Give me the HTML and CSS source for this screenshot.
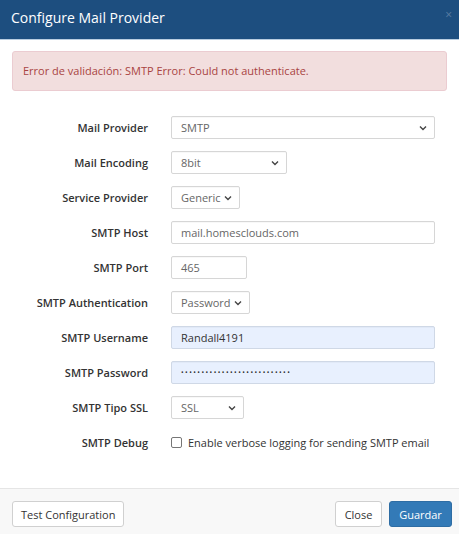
FILE: index.html
```html
<!DOCTYPE html>
<html>
<head>
<meta charset="utf-8">
<link rel="stylesheet" href="styles.css">
</head>
<body>
<div class="modal">
  <div class="modal-header">
    <h4 class="modal-title">Configure Mail Provider</h4>
    <span class="close-x">×</span>
  </div>
  <div class="modal-body">
    <div class="alert">Error de validación: SMTP Error: Could not authenticate.</div>
    <div class="form">
      <label class="lbl">Mail Provider</label>
      <div class="ctl"><div class="select w-full">SMTP</div></div>

      <label class="lbl">Mail Encoding</label>
      <div class="ctl"><div class="select w-enc">8bit</div></div>

      <label class="lbl">Service Provider</label>
      <div class="ctl"><div class="select w-sp">Generic</div></div>

      <label class="lbl">SMTP Host</label>
      <div class="ctl"><div class="input w-full">mail.homesclouds.com</div></div>

      <label class="lbl">SMTP Port</label>
      <div class="ctl"><div class="input w-port">465</div></div>

      <label class="lbl">SMTP Authentication</label>
      <div class="ctl"><div class="select w-auth">Password</div></div>

      <label class="lbl">SMTP Username</label>
      <div class="ctl"><div class="input autofill w-full dark">Randall4191</div></div>

      <label class="lbl">SMTP Password</label>
      <div class="ctl"><div class="input autofill w-full dark"><span class="dots">•••••••••••••••••••••••••••</span></div></div>

      <label class="lbl">SMTP Tipo SSL</label>
      <div class="ctl"><div class="select w-ssl">SSL</div></div>

      <label class="lbl">SMTP Debug</label>
      <div class="ctl"><span class="checkbox"></span><span class="cb-text">Enable verbose logging for sending SMTP email</span></div>
    </div>
  </div>
  <div class="modal-footer">
    <button class="btn">Test Configuration</button>
    <div class="right">
      <button class="btn close">Close</button>
      <button class="btn primary">Guardar</button>
    </div>
  </div>
</div>
</body>
</html>
```

FILE: styles.css
```css
html, body {
  margin: 0;
  padding: 0;
  background: #fff;
}
body {
  font-family: "Open Sans", "Liberation Sans", sans-serif;
  font-size: 11px;
  color: #333;
  width: 459px;
  height: 534px;
  overflow: hidden;
}
.modal {
  display: flex;
  flex-direction: column;
  height: 534px;
}
.modal-header {
  height: 39px;
  background: #1d4e7f;
  border-bottom: 1px solid #b9cde0;
  display: flex;
  align-items: center;
  justify-content: space-between;
  padding: 0 11px;
  box-sizing: content-box;
}
.modal-title {
  margin: 0;
  font-size: 14px;
  font-weight: 400;
  color: #fff;
  line-height: 20px;
  margin-top: -4px;
}
.close-x {
  color: #5a7ea3;
  font-size: 12px;
  line-height: 12px;
  margin-top: -10px;
  margin-right: -4px;
}
.modal-body {
  padding: 11px 12px 0 12px;
  flex: 1;
}
.alert {
  height: 38px;
  line-height: 38px;
  background: #f2dede;
  border: 1px solid #ebccd1;
  border-radius: 3px;
  color: #a94442;
  padding: 0 10px;
  font-size: 11px;
}
.form {
  margin-top: 19px;
  display: grid;
  grid-template-columns: 136px 1fr;
  grid-auto-rows: 35px;
  column-gap: 23px;
}
.lbl {
  font-weight: 600;
  text-align: right;
  display: flex;
  align-items: center;
  justify-content: flex-end;
  color: #333;
}
.ctl {
  display: flex;
  align-items: center;
}
.input, .select {
  height: 23px;
  box-sizing: border-box;
  border: 1px solid #d6d6d6;
  border-radius: 2px;
  background: #fff;
  color: #666;
  padding: 0 9px;
  display: flex;
  align-items: center;
  font-size: 11px;
  box-shadow: inset 0 1px 1px rgba(0,0,0,0.03);
}
.select {
  background-image: url("data:image/svg+xml;utf8,<svg xmlns='http://www.w3.org/2000/svg' width='8' height='6' viewBox='0 0 8 6'><path d='M1 1.5 L4 4.5 L7 1.5' fill='none' stroke='%23444' stroke-width='1.4'/></svg>");
  background-repeat: no-repeat;
  background-position: right 7px center;
  background-size: 8px 6px;
}
.autofill {
  background: #e8f0fe;
  border-color: #cfd8e6;
}
.dark { color: #333; }
.dots {
  font-size: 7px;
  letter-spacing: 1.45px;
  color: #333;
}
.w-full { width: 264px; }
.w-enc { width: 116px; }
.w-sp { width: 69px; }
.w-port { width: 76px; }
.w-auth { width: 79px; }
.w-ssl { width: 73px; }
.checkbox {
  width: 11px;
  height: 11px;
  box-sizing: border-box;
  border: 1px solid #767676;
  border-radius: 2px;
  background: #fff;
  margin-right: 6px;
}
.cb-text {
  color: #333;
  font-size: 11px;
}
.modal-footer {
  border-top: 1px solid #e5e5e5;
  background: #f8f8f8;
  display: flex;
  justify-content: space-between;
  align-items: flex-start;
  padding: 12px 7px 0 12px;
  box-sizing: border-box;
  height: 46px;
}
.right {
  display: flex;
  gap: 7px;
}
.btn {
  font-family: "Open Sans", "Liberation Sans", sans-serif;
  font-size: 11px;
  height: 26px;
  padding: 0 8px;
  border: 1px solid #d0d0d0;
  border-radius: 3px;
  background: #fff;
  color: #333;
  margin: 0;
}
.btn.close {
  width: 47px;
  padding: 0;
}
.btn.primary {
  background: #337ab7;
  border-color: #2e6da4;
  color: #fff;
  width: 63px;
  padding: 0;
}
```
